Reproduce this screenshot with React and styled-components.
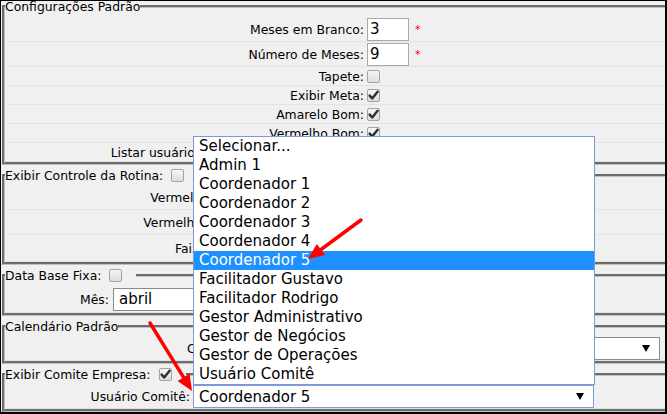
import styled, { createGlobalStyle } from 'styled-components';

const GlobalStyle = createGlobalStyle`
  body {
    margin: 0;
    background: #f0f0f0;
  }
`;

const Frame = styled.div`
  position: relative;
  width: 667px;
  height: 414px;
  box-sizing: border-box;
  border: 1px solid #000;
  border-right-width: 2px;
  border-bottom-width: 2px;
  background: #f0f0f0;
  overflow: hidden;
  font-family: "DejaVu Sans", Verdana, sans-serif;
  font-size: 12.4px;
  color: #000;
`;

const Group = styled.fieldset`
  margin: ${p => (p.$first ? '-5px' : '0')} 0 0 1px;
  padding: 0;
  border: 3px groove #c0c0c0;
  border-right: none;
  min-width: 0;
`;

const Legend = styled.legend`
  padding: 0;
  margin: 0;
  height: 21px;
  display: flex;
  align-items: center;
  line-height: 15px;
  white-space: nowrap;
`;

const Row = styled.div`
  display: grid;
  grid-template-columns: ${p => p.$labelWidth}px 1fr;
  column-gap: ${p => p.$gap ?? 3}px;
  align-items: center;
  height: ${p => p.$h}px;
  box-sizing: border-box;
  margin-left: 1px;
  border-bottom: 1px solid #e3e3e3;
`;

const Label = styled.span`
  text-align: right;
  white-space: nowrap;
`;

const Value = styled.div`
  display: flex;
  align-items: center;
`;

const Field = styled.div`
  box-sizing: border-box;
  width: 42px;
  height: 23px;
  border: 1px solid #a9a9a9;
  background: #fff;
  padding-left: 2px;
  font-size: 15px;
  line-height: 21px;
`;

const Required = styled.span`
  color: #ff0000;
  font-size: 11px;
  margin-left: 6px;
  align-self: flex-start;
  margin-top: 5px;
`;

const Box = styled.span`
  position: relative;
  display: inline-block;
  box-sizing: border-box;
  width: 13px;
  height: 13px;
  border: 1px solid #a3a3a3;
  border-radius: 2px;
  background: linear-gradient(#f6f6f6, #dcdcdc);
  margin-left: ${p => (p.$inLegend ? '8px' : '0')};
  margin-right: ${p => (p.$inLegend ? '14px' : '0')};

  svg {
    position: absolute;
    left: -1px;
    top: -1px;
  }
`;

const Select = styled.div`
  box-sizing: border-box;
  width: ${p => p.$width}px;
  height: 23px;
  display: flex;
  align-items: center;
  justify-content: space-between;
  padding: 0 9px 0 5px;
  border: 1px solid ${p => (p.$focused ? '#7a9ad8' : '#8a8a8a')};
  background: #fff;
  font-size: 15px;
`;

const List = styled.ul`
  position: absolute;
  left: 192px;
  top: 135px;
  width: 402px;
  box-sizing: border-box;
  margin: 0;
  padding: 0;
  list-style: none;
  border: 1px solid #7a9ad8;
  background: #fff;
  font-size: 15px;
`;

const Option = styled.li`
  height: 19px;
  line-height: 19px;
  padding-left: 5px;
  white-space: nowrap;
  background: ${p => (p.$selected ? '#1e90ff' : 'transparent')};
  color: ${p => (p.$selected ? '#fff' : '#000')};
`;

const Marks = styled.svg`
  position: absolute;
  left: -1px;
  top: -1px;
  pointer-events: none;
`;

function Check({ checked, inLegend }) {
  return (
    <Box $inLegend={inLegend}>
      {checked && (
        <svg width="13" height="13" viewBox="0 0 13 13">
          <path d="M2.6 6.6 L5.2 9.4 L10.6 2.8" fill="none" stroke="#2e2e2e" strokeWidth="2.4" strokeLinecap="round" strokeLinejoin="round" />
        </svg>
      )}
    </Box>
  );
}

function Caret() {
  return (
    <svg width="8" height="7" viewBox="0 0 8 7">
      <path d="M0 0 H8 L4 7 Z" fill="#000" />
    </svg>
  );
}

const options = [
  'Selecionar...',
  'Admin 1',
  'Coordenador 1',
  'Coordenador 2',
  'Coordenador 3',
  'Coordenador 4',
  'Coordenador 5',
  'Facilitador Gustavo',
  'Facilitador Rodrigo',
  'Gestor Administrativo',
  'Gestor de Negócios',
  'Gestor de Operações',
  'Usuário Comitê',
];

export default function App() {
  return (
    <Frame>
      <GlobalStyle />

      <Group $first>
        <Legend>Configurações Padrão</Legend>
        <Row $labelWidth={358} $h={25}>
          <Label>Meses em Branco:</Label>
          <Value><Field>3</Field><Required>*</Required></Value>
        </Row>
        <Row $labelWidth={358} $h={25}>
          <Label>Número de Meses:</Label>
          <Value><Field>9</Field><Required>*</Required></Value>
        </Row>
        <Row $labelWidth={358} $h={19}>
          <Label>Tapete:</Label>
          <Value><Check /></Value>
        </Row>
        <Row $labelWidth={358} $h={19}>
          <Label>Exibir Meta:</Label>
          <Value><Check checked /></Value>
        </Row>
        <Row $labelWidth={358} $h={19}>
          <Label>Amarelo Bom:</Label>
          <Value><Check checked /></Value>
        </Row>
        <Row $labelWidth={358} $h={19}>
          <Label>Vermelho Bom:</Label>
          <Value><Check checked /></Value>
        </Row>
        <Row $labelWidth={358} $h={19}>
          <Label>Listar usuários inativos na seleção geral:</Label>
          <Value><Check /></Value>
        </Row>
      </Group>

      <Group>
        <Legend>Exibir Controle da Rotina:<Check inLegend /></Legend>
        <Row $labelWidth={291} $h={24}>
          <Label>Vermelho Rotina Diária:</Label>
          <Value><Field>2</Field></Value>
        </Row>
        <Row $labelWidth={291} $h={25}>
          <Label>Vermelho Rotina Mensal:</Label>
          <Value><Field>5</Field></Value>
        </Row>
        <Row $labelWidth={291} $h={27}>
          <Label>Faixa de Tolerância:</Label>
          <Value><Field>1</Field></Value>
        </Row>
      </Group>

      <Group>
        <Legend>Data Base Fixa:<Check inLegend /></Legend>
        <Row $labelWidth={103} $gap={4} $h={27}>
          <Label>Mês:</Label>
          <Value><Select $width={150}>abril<Caret /></Select></Value>
        </Row>
      </Group>

      <Group>
        <Legend>Calendário Padrão</Legend>
        <Row $labelWidth={252} $h={24}>
          <Label>Calendário:</Label>
          <Value><Select $width={399}>Padrão<Caret /></Select></Value>
        </Row>
      </Group>

      <Group>
        <Legend>Exibir Comite Empresa:<Check checked inLegend /></Legend>
        <Row $labelWidth={184} $h={24}>
          <Label>Usuário Comitê:</Label>
          <Value><Select $width={401} $focused>Coordenador 5<Caret /></Select></Value>
        </Row>
      </Group>

      <List>
        {options.map((o, i) => (
          <Option key={o} $selected={i === 6}>{o}</Option>
        ))}
      </List>

      <Marks width="667" height="414" viewBox="0 0 667 414">
        <g stroke="#ff0000" strokeWidth="3.5" strokeLinecap="round">
          <line x1="361" y1="220" x2="321" y2="249.5" />
          <line x1="150" y1="323" x2="183.6" y2="377.4" />
        </g>
        <g fill="#ff0000">
          <polygon points="308,259 325,255.1 316.8,243.9" />
          <polygon points="192,391 177.6,381.1 189.6,373.7" />
        </g>
      </Marks>
    </Frame>
  );
}
